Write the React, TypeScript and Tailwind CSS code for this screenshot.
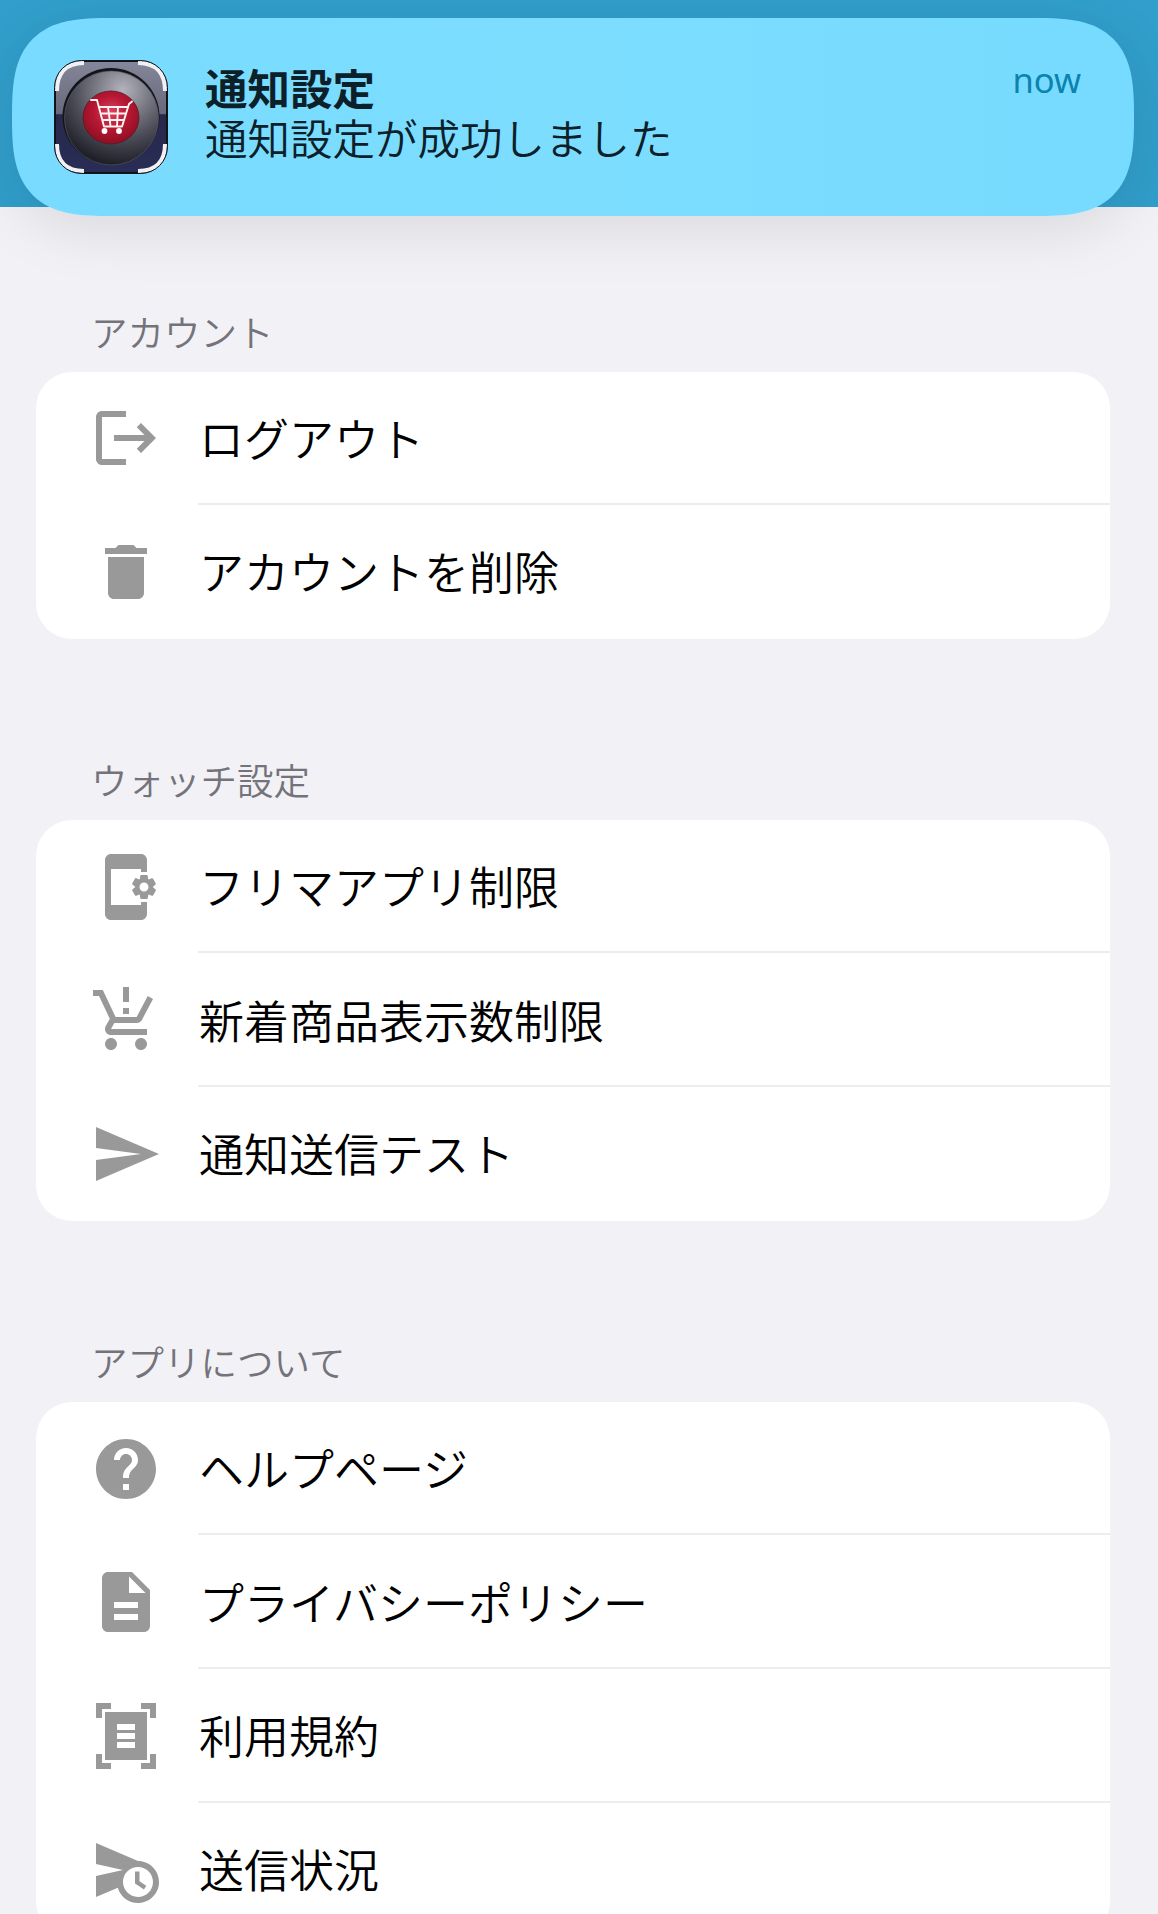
import React from "react";
import type { IconType } from "react-icons";
import {
  MdAppSettingsAlt,
  MdDelete,
  MdDescription,
  MdHelp,
  MdLogout,
  MdProductionQuantityLimits,
  MdScheduleSend,
  MdSend,
} from "react-icons/md";

interface SettingItem {
  label: string;
  icon: IconType | React.FC<{ className?: string }>;
}

interface SettingGroup {
  title: string;
  items: SettingItem[];
}

function DocumentFrameIcon({ className }: { className?: string }) {
  return (
    <svg viewBox="0 0 24 24" fill="currentColor" className={className}>
      <path d="M2 1h5v2H4v3H2zM17 1h5v5h-2V3h-3zM2 18h2v3h3v2H2zM20 18h2v5h-5v-2h3z" />
      <path
        fillRule="evenodd"
        d="M5 4h14v16H5zM9 8v2h6V8zM9 11v2h6v-2zM9 14v2h6v-2z"
      />
    </svg>
  );
}

const GROUPS: SettingGroup[] = [
  {
    title: "アカウント",
    items: [
      { label: "ログアウト", icon: MdLogout },
      { label: "アカウントを削除", icon: MdDelete },
    ],
  },
  {
    title: "ウォッチ設定",
    items: [
      { label: "フリマアプリ制限", icon: MdAppSettingsAlt },
      { label: "新着商品表示数制限", icon: MdProductionQuantityLimits },
      { label: "通知送信テスト", icon: MdSend },
    ],
  },
  {
    title: "アプリについて",
    items: [
      { label: "ヘルプページ", icon: MdHelp },
      { label: "プライバシーポリシー", icon: MdDescription },
      { label: "利用規約", icon: DocumentFrameIcon },
      { label: "送信状況", icon: MdScheduleSend },
    ],
  },
];

function AppIcon() {
  return (
    <svg viewBox="0 0 114 114" className="size-[114px] shrink-0">
      <defs>
        <linearGradient id="plate" x1="0" y1="0" x2="0" y2="1">
          <stop offset="0" stopColor="#85879a" />
          <stop offset="0.47" stopColor="#686a7b" />
          <stop offset="0.48" stopColor="#272a4b" />
          <stop offset="1" stopColor="#292c55" />
        </linearGradient>
        <radialGradient id="dial" cx="0.62" cy="0.2" r="0.8">
          <stop offset="0" stopColor="#b4b3bd" />
          <stop offset="0.35" stopColor="#7b7b86" />
          <stop offset="0.65" stopColor="#4b4c57" />
          <stop offset="1" stopColor="#1f1f28" />
        </radialGradient>
        <radialGradient id="red" cx="0.5" cy="0.4" r="0.6">
          <stop offset="0" stopColor="#dc4462" />
          <stop offset="0.5" stopColor="#b81833" />
          <stop offset="1" stopColor="#8d0f22" />
        </radialGradient>
        <clipPath id="tile">
          <rect x="0.5" y="0.5" width="113" height="113" rx="27" />
        </clipPath>
      </defs>
      <g clipPath="url(#tile)">
        <rect width="114" height="114" fill="url(#plate)" />
        <path d="M1 28V86M113 28V86M28 1H86M28 113H86" stroke="#111118" strokeWidth="2" />
        <path
          d="M3 31C3 13 12 3 30 3M84 3C102 3 111 13 111 31M111 84C111 102 102 111 84 111M30 111C12 111 3 102 3 84"
          fill="none"
          stroke="#f1f1f4"
          strokeWidth="4"
        />
      </g>
      <rect x="0.5" y="0.5" width="113" height="113" rx="27" fill="none" stroke="#15151c" />
      <circle cx="57" cy="56.5" r="48.5" fill="#14141b" />
      <circle cx="57.5" cy="58" r="47" fill="url(#dial)" stroke="#5b5c6a" strokeWidth="0.6" />
      <ellipse cx="57" cy="57.5" rx="28" ry="26.5" fill="url(#red)" stroke="#5e1522" strokeWidth="0.8" />
      {/* cart */}
      <path
        d="M37 40h6l7 26.5h18L75 44l3-2.5M45 47h28.5M46.5 53.5H72M48.5 60H70M54 47l2.5 19M64 47l-1 19"
        fill="none"
        stroke="#fff4f2"
        strokeWidth="1.9"
        strokeLinecap="round"
        strokeLinejoin="round"
      />
      <circle cx="50.5" cy="71" r="2.9" fill="#fff" />
      <circle cx="65" cy="71" r="2.9" fill="#fff" />
    </svg>
  );
}

function NotificationBanner() {
  return (
    <div className="absolute top-[18px] left-[12px] flex h-[198px] w-[1122px] rounded-[99px] bg-gradient-to-r from-[#78dbff] via-[#7cddff] to-[#76dbff] pt-[42px] pr-[53px] pl-[42px] shadow-[0_14px_60px_rgba(0,0,0,0.1)] [corner-shape:superellipse(1.55)]">
      <AppIcon />
      <div className="ml-[37px] flex-1 pt-[2px] text-[42.5px] leading-[50px] text-[#0c2029]">
        <p className="font-bold">通知設定</p>
        <p className="font-[350]">通知設定が成功しました</p>
      </div>
      <span className="-mt-px font-['Noto_Sans'] text-[34.5px] leading-[42px] text-[#0c83ae]">now</span>
    </div>
  );
}

function SettingRow({ item, last }: { item: SettingItem; last: boolean }) {
  const Icon = item.icon;
  return (
    <div className="flex h-[133.8px]">
      <div className="flex w-[162px] items-center pl-[54px]">
        <Icon className="size-[72px] text-[#999999]" />
      </div>
      <div
        className={`flex flex-1 items-center border-b-2 pl-px text-[45px] font-[350] text-black ${
          last ? "border-transparent" : "border-[#ededee]"
        }`}
      >
        {item.label}
      </div>
    </div>
  );
}

export default function App() {
  return (
    <div
      lang="ja"
      className="relative h-[1914px] w-[1158px] overflow-hidden bg-[#f1f1f6] font-['Noto_Sans_CJK_JP',sans-serif]"
    >
      <header className="h-[207px] bg-[#319ecb]" />

      <main className="pt-[31.5px] pr-[48px] pl-[36px]">
        {GROUPS.map((group) => (
          <section key={group.title} className="mb-[47.6px]">
            <h2 className="flex h-[133px] items-end pb-[12px] pl-[55px] text-[36.5px] font-[350] text-[#74737a]">
              {group.title}
            </h2>
            <div className="overflow-hidden rounded-[36px] bg-white">
              {group.items.map((item, i) => (
                <SettingRow
                  key={item.label}
                  item={item}
                  last={i === group.items.length - 1}
                />
              ))}
            </div>
          </section>
        ))}
      </main>

      <NotificationBanner />
    </div>
  );
}
